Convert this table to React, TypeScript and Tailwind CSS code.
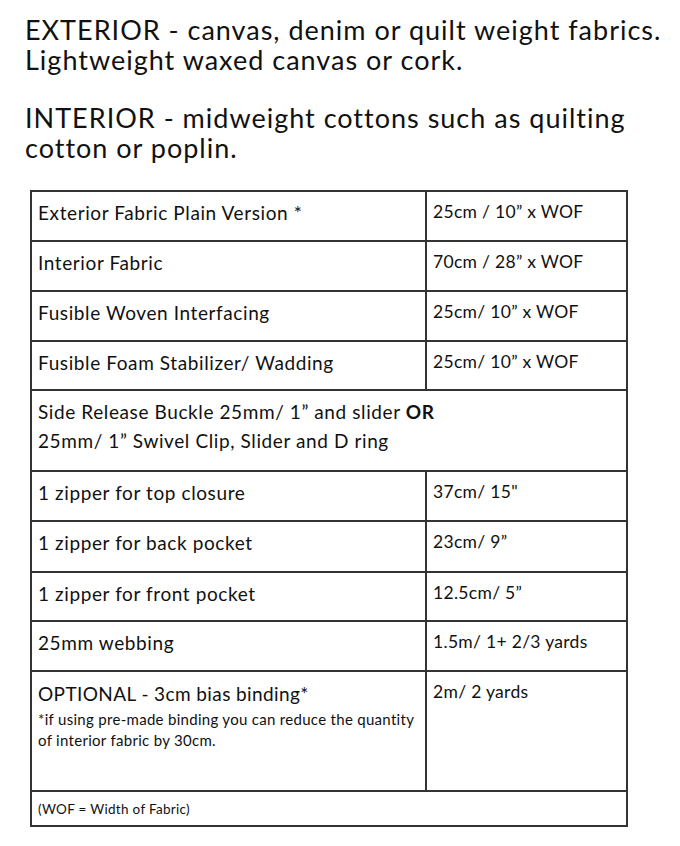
const rows: { item: string; qty: string; h: string }[] = [
  { item: 'Exterior Fabric Plain Version *', qty: '25cm / 10” x WOF', h: 'h-[50px]' },
  { item: 'Interior Fabric', qty: '70cm / 28” x WOF', h: 'h-[50px]' },
  { item: 'Fusible Woven Interfacing', qty: '25cm/ 10”  x WOF', h: 'h-[50px]' },
  { item: 'Fusible Foam Stabilizer/ Wadding', qty: '25cm/ 10” x WOF', h: 'h-[49px]' },
];

const rows2: { item: string; qty: string; h: string }[] = [
  { item: '1 zipper for top closure', qty: '37cm/ 15"', h: 'h-[50px]' },
  { item: '1 zipper for back pocket', qty: '23cm/ 9”', h: 'h-[51px]' },
  { item: '1 zipper for front pocket', qty: '12.5cm/ 5”', h: 'h-[49px]' },
  { item: '25mm webbing', qty: '1.5m/ 1+ 2/3 yards', h: 'h-[50px]' },
];

function Row({ item, qty, h }: { item: string; qty: string; h: string }) {
  return (
    <div className={`flex ${h} border-t-2 border-[#333]`}>
      <div className="w-[395px] border-r-2 border-[#333] pl-[6px] pt-[8px] text-[19px] leading-[26px] tracking-[0.6px]">
        {item}
      </div>
      <div className="flex-1 pl-[6px] pt-[7px] text-[17.5px] leading-[26px] tracking-[0.3px]">{qty}</div>
    </div>
  );
}

export default function App() {
  return (
    <div className="min-h-[846px] w-[680px] bg-white text-[#111]" style={{ fontFamily: 'Lato, "Open Sans", sans-serif' }}>
      <div className="pl-[25px] pt-[15px] text-[27px] leading-[30px] tracking-[1px]">
        <p>EXTERIOR - canvas, denim or quilt weight fabrics.</p>
        <p>Lightweight waxed canvas or cork.</p>
        <p className="mt-[28px]">INTERIOR - midweight cottons such as quilting</p>
        <p>cotton or poplin.</p>
      </div>

      <div className="ml-[30px] mt-[27px] w-[598px] border-x-2 border-b-2 border-[#333]">
        {rows.map((r) => (
          <Row key={r.item} {...r} />
        ))}
        <div className="h-[81px] border-t-2 border-[#333] pl-[6px] pt-[6px] text-[19px] leading-[29px] tracking-[0.6px]">
          <p>
            Side Release Buckle 25mm/ 1” and slider <b>OR</b>
          </p>
          <p>25mm/ 1” Swivel Clip, Slider and D ring</p>
        </div>
        {rows2.map((r) => (
          <Row key={r.item} {...r} />
        ))}
        <div className="flex h-[120px] border-t-2 border-[#333]">
          <div className="w-[395px] border-r-2 border-[#333] pl-[6px] pt-[9px]">
            <p className="text-[19px] leading-[26px] tracking-[0.4px]">OPTIONAL - 3cm bias binding*</p>
            <p className="mt-[2px] text-[15px] leading-[21px] tracking-[0.3px]">
              *if using pre-made binding you can reduce the quantity
              <br />
              of interior fabric by 30cm.
            </p>
          </div>
          <div className="flex-1 pl-[6px] pt-[7px] text-[17.5px] leading-[26px] tracking-[0.3px]">2m/ 2 yards</div>
        </div>
        <div className="h-[35px] border-t-2 border-[#333] pl-[6px] pt-[8px] text-[13.5px] leading-[18px] tracking-[0.3px]">
          (WOF = Width of Fabric)
        </div>
      </div>
    </div>
  );
}
